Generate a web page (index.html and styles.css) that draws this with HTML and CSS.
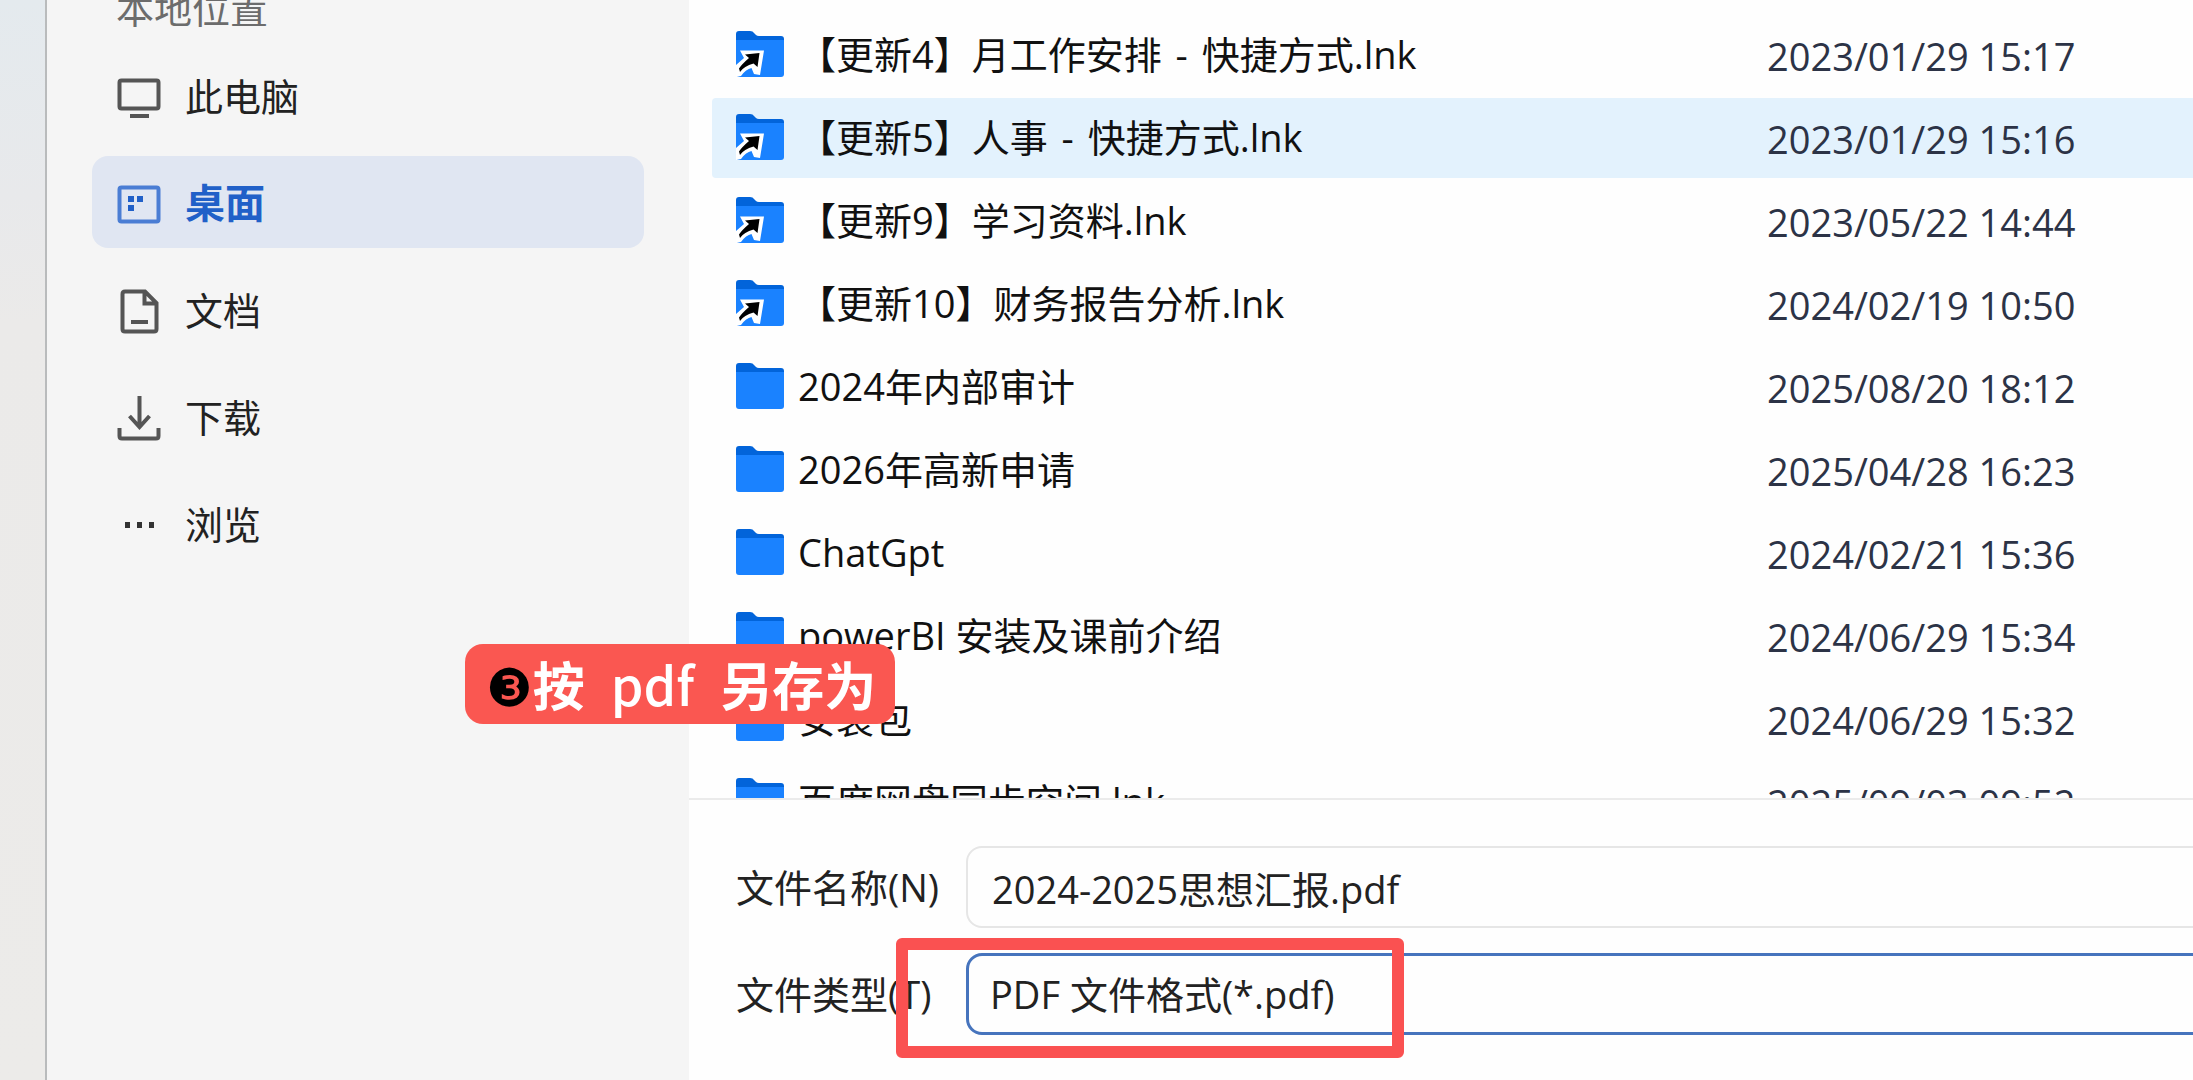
FILE: index.html
```html
<!DOCTYPE html>
<html lang="zh-CN">
<head>
<meta charset="utf-8">
<title>另存为</title>
<link rel="stylesheet" href="styles.css">
</head>
<body>
<svg class="defs" aria-hidden="true">
  <symbol id="folder" viewBox="0 0 48 46">
    <path d="M0 3Q0 0 3 0H14Q17 0 18 2L20 4Q21 5 23 5H45Q48 5 48 8V20H0Z" fill="#0264da"/>
    <path d="M0 9H48V43Q48 46 45 46H3Q0 46 0 43Z" fill="#1a82ff"/>
  </symbol>
  <symbol id="shortcut" viewBox="0 0 48 46">
    <use href="#folder"/>
    <path d="M4 19.500H28L24 44L18 43L15.500 37Q10 38 5 45L0 46V34L8 27Z" fill="#fff"/>
    <path d="M9 23.500L23.500 22L21.500 36L17.500 32.500Q8 35 4 41L3 37.500Q6 33 13 27Z" fill="#000"/>
  </symbol>
</svg>
<div class="window">
  <div class="backdrop"></div>
  <nav class="sidebar">
    <h2 class="sidebar-title">本地位置</h2>
    <a class="place" href="#pc">
      <svg class="place-icon" viewBox="0 0 44 48"><rect x="2.5" y="8.5" width="39" height="28" rx="2"/><path d="M13 44H32"/></svg>
      <span>此电脑</span>
    </a>
    <a class="place active" href="#desktop">
      <svg class="place-icon" viewBox="0 0 44 48"><rect x="2.5" y="8.5" width="39" height="34" rx="2"/><path class="solid" d="M11 17h6v6h-6zM20 17h6v6h-6zM11 26h6v6h-6z"/></svg>
      <span>桌面</span>
    </a>
    <a class="place" href="#documents">
      <svg class="place-icon" viewBox="0 0 44 48"><path d="M8 5.500H28L39.500 17V43Q39.500 45.500 37 45.500H8Q5.500 45.500 5.500 43V8Q5.500 5.500 8 5.500ZM27.500 6V17.500H39M14 36H31"/></svg>
      <span>文档</span>
    </a>
    <a class="place" href="#downloads">
      <svg class="place-icon" viewBox="0 0 44 48"><path d="M22.500 3V33M12.500 23L22.500 34L32.500 23M2.500 35V43Q2.500 45.500 5 45.500H39Q41.500 45.500 41.500 43V35"/></svg>
      <span>下载</span>
    </a>
    <a class="place" href="#browse">
      <svg class="place-icon" viewBox="0 0 44 48"><path class="solid" d="M8 22h5v6h-5zM20 22h5v6h-5zM32 22h5v6h-5z"/></svg>
      <span>浏览</span>
    </a>
  </nav>
  <main class="main">
    <div class="list">
      <table class="files">
        <tbody>
          <tr><td><div class="file"><svg class="file-icon"><use href="#shortcut"/></svg><span>【更新4】月工作安排<span class="dash"> - </span>快捷方式.lnk</span></div></td><td class="date">2023/01/29 15:17</td></tr>
          <tr class="hover"><td><div class="file"><svg class="file-icon"><use href="#shortcut"/></svg><span>【更新5】人事<span class="dash"> - </span>快捷方式.lnk</span></div></td><td class="date">2023/01/29 15:16</td></tr>
          <tr><td><div class="file"><svg class="file-icon"><use href="#shortcut"/></svg><span>【更新9】学习资料.lnk</span></div></td><td class="date">2023/05/22 14:44</td></tr>
          <tr><td><div class="file"><svg class="file-icon"><use href="#shortcut"/></svg><span>【更新10】财务报告分析.lnk</span></div></td><td class="date">2024/02/19 10:50</td></tr>
          <tr><td><div class="file"><svg class="file-icon"><use href="#folder"/></svg><span>2024年内部审计</span></div></td><td class="date">2025/08/20 18:12</td></tr>
          <tr><td><div class="file"><svg class="file-icon"><use href="#folder"/></svg><span>2026年高新申请</span></div></td><td class="date">2025/04/28 16:23</td></tr>
          <tr><td><div class="file"><svg class="file-icon"><use href="#folder"/></svg><span>ChatGpt</span></div></td><td class="date">2024/02/21 15:36</td></tr>
          <tr><td><div class="file"><svg class="file-icon"><use href="#folder"/></svg><span>powerBI 安装及课前介绍</span></div></td><td class="date">2024/06/29 15:34</td></tr>
          <tr><td><div class="file"><svg class="file-icon"><use href="#folder"/></svg><span>安装包</span></div></td><td class="date">2024/06/29 15:32</td></tr>
          <tr><td><div class="file"><svg class="file-icon"><use href="#folder"/></svg><span>百度网盘同步空间.lnk</span></div></td><td class="date">2025/09/03 09:52</td></tr>
        </tbody>
      </table>
    </div>
    <form class="save">
      <div class="field">
        <label for="name">文件名称(N)</label>
        <input id="name" class="control" type="text" value="2024-2025思想汇报.pdf">
      </div>
      <div class="field">
        <label for="type">文件类型(T)</label>
        <select id="type" class="control focused"><option>PDF 文件格式(*.pdf)</option></select>
        <div class="marker"></div>
      </div>
    </form>
  </main>
  <div class="step"><span><span class="num">❸</span>按</span> <span class="latin">pdf</span> <span>另存为</span></div>
</div>
</body>
</html>
```
FILE: styles.css
```css
* {
  box-sizing: border-box;
}

body {
  margin: 0;
  font: 38px/48px "Open Sans", "Noto Sans CJK SC", sans-serif;
  color: #222;
  background: #fefefe;
}

.defs {
  position: absolute;
  width: 0;
  height: 0;
}

.window {
  position: relative;
  display: flex;
  height: 100vh;
  overflow: hidden;
}

.backdrop {
  flex: 0 0 47px;
  border-right: 2px solid #b9bbbc;
  background: linear-gradient(#e4eaee, #e8e9eb 18%, #ebeae9 30%, #ecebe9);
}

/* Places */

.sidebar {
  flex: 0 0 642px;
  display: flex;
  flex-direction: column;
  gap: 15px;
  padding: 0 45px;
  overflow: hidden;
  background: #f5f5f5;
}

.sidebar-title {
  margin: -16px 0 2px;
  padding-left: 24px;
  font-size: 38px;
  line-height: 48px;
  font-weight: 400;
  color: #6c6c6c;
}

.place {
  display: flex;
  align-items: center;
  gap: 24px;
  height: 92px;
  padding: 2px 25px 0;
  border-radius: 16px;
  color: #222;
  text-decoration: none;
}

.place.active {
  background: #e0e6f2;
  color: #2160c8;
  font-size: 40px;
  font-weight: 700;
}

.place-icon {
  width: 44px;
  height: 48px;
  fill: none;
  stroke: #555;
  stroke-width: 4;
}

.place.active .place-icon {
  stroke: #4a7dd4;
}

.place-icon .solid {
  fill: #333;
  stroke: none;
}

.place.active .solid {
  fill: #2160c8;
}

/* File list */

.main {
  flex: 1;
  min-width: 0;
  display: flex;
  flex-direction: column;
}

.list {
  flex: 1;
  min-height: 0;
  overflow: hidden;
  padding: 12px 0 0 23px;
}

.files {
  width: 100%;
  border-collapse: separate;
  border-spacing: 0 3px;
  color: #111;
  white-space: nowrap;
}

.files td {
  height: 80px;
  padding: 0 0 0 24px;
}

.files .date {
  width: 426px;
  padding: 2px 0 0;
  color: #2c3346;
}

.hover td {
  background: #e3f2fd;
}

.hover td:first-child {
  border-radius: 4px 0 0 4px;
}

.file {
  display: flex;
  align-items: center;
  gap: 14px;
  padding-bottom: 2px;
}

.file-icon {
  width: 48px;
  height: 46px;
}

.dash {
  padding: 0 4px;
}

/* File name and type */

.save {
  display: flex;
  flex-direction: column;
  gap: 25px;
  padding: 46px 0 45px 47px;
  border-top: 2px solid #ebebeb;
}

.field {
  position: relative;
  display: flex;
  align-items: center;
  height: 82px;
}

.field label {
  flex: 0 0 230px;
}

.control {
  flex: 1;
  min-width: 0;
  height: 82px;
  margin: 0 -16px 0 0;
  padding: 0 24px;
  border: 2px solid #e6e6e6;
  border-radius: 16px;
  outline: none;
  appearance: none;
  background: #fefefe;
  color: #222;
  font: inherit;
}

.control.focused {
  padding: 0 21px;
  border: 3px solid #4674bd;
}

/* Annotations */

.marker {
  position: absolute;
  top: -15px;
  left: 160px;
  width: 508px;
  height: 120px;
  border: 12px solid #fa5151;
  border-radius: 6px;
}

.step {
  position: absolute;
  top: 644px;
  left: 465px;
  display: flex;
  gap: 26px;
  padding: 8px 19px 8px 21px;
  border-radius: 18px;
  background: #fa5751;
  color: #fff;
  font: 700 52px/64px "Noto Sans CJK SC", sans-serif;
}

.step > span {
  height: 64px;
}

.latin {
  font-weight: 500;
}

.num {
  color: #000;
  font-family: "DejaVu Serif", "DejaVu Sans", serif;
  font-weight: 400;
}
```
